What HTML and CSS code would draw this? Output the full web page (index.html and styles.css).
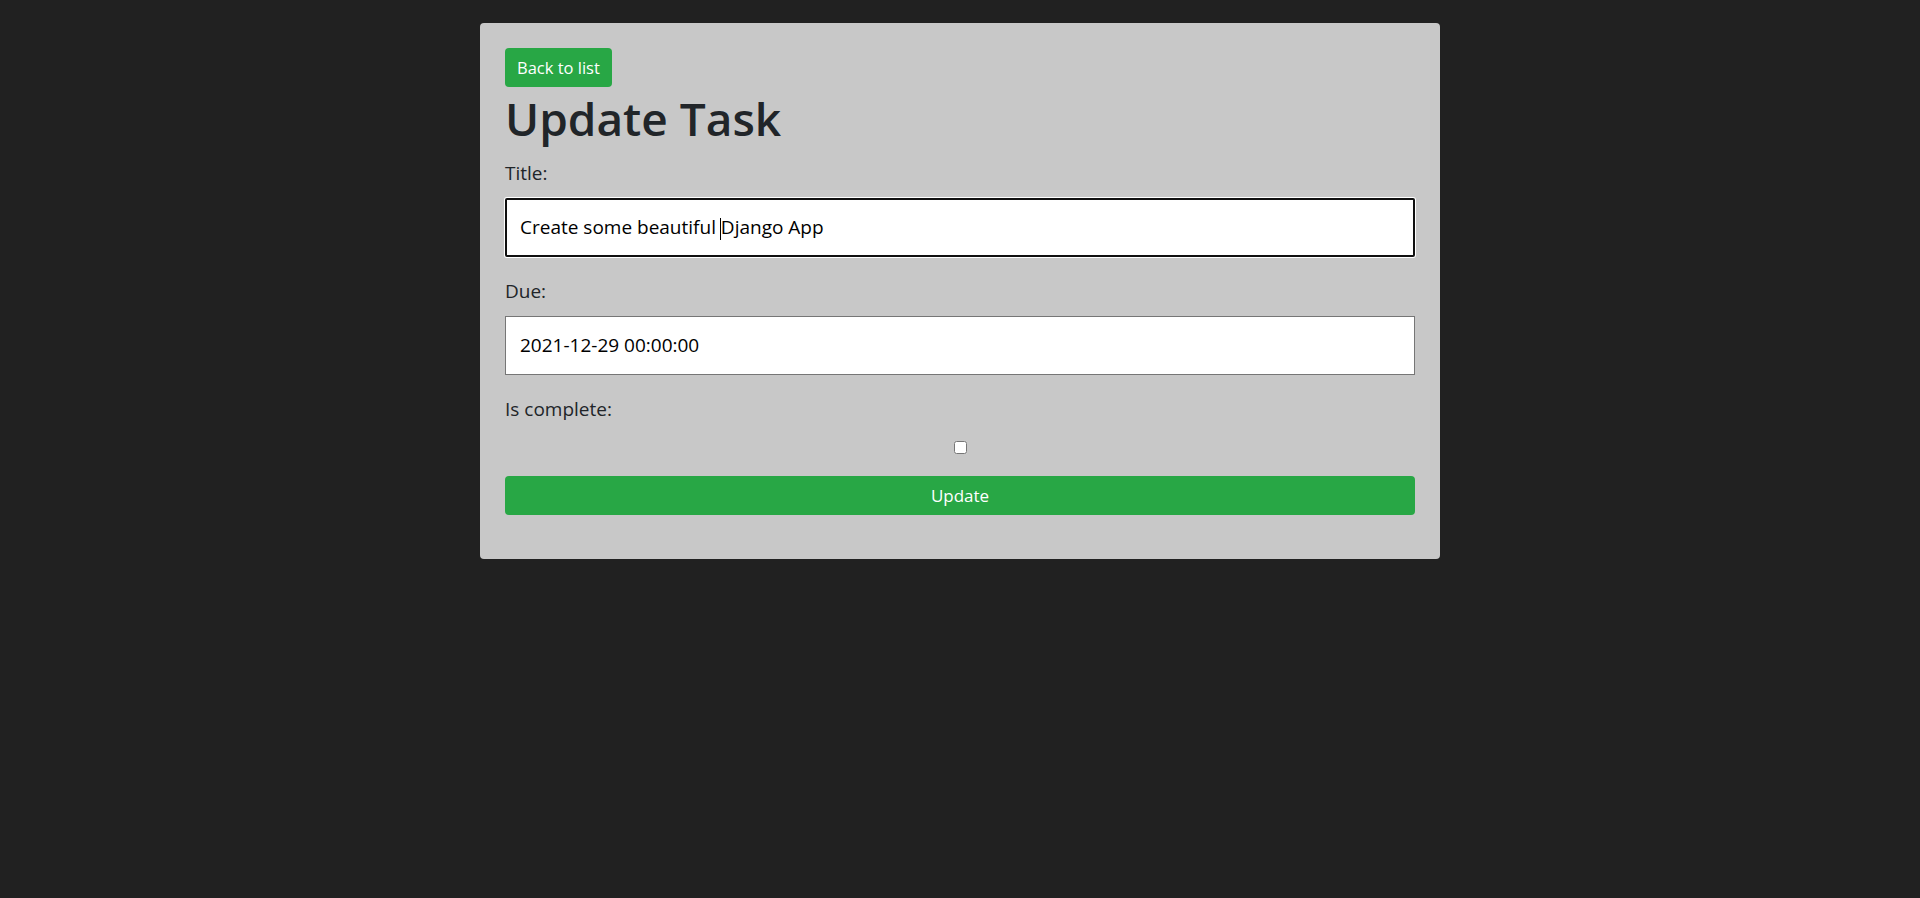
FILE: index.html
```html
<!DOCTYPE html>
<html lang="en">
<head>
<meta charset="utf-8">
<title>Update Task</title>
<link rel="stylesheet" href="styles.css">
</head>
<body>
<div class="card">
  <a class="btn btn-back" href="#">Back to list</a>
  <h1 class="heading">Update Task</h1>
  <form class="task-form">
    <div class="field">
      <label class="field-label" for="id_title">Title:</label>
      <div class="input-wrap">
        <input class="text-input is-focused" id="id_title" type="text" value="Create some beautiful Django App">
        <span class="caret"></span>
      </div>
    </div>
    <div class="field">
      <label class="field-label" for="id_due">Due:</label>
      <input class="text-input" id="id_due" type="text" value="2021-12-29 00:00:00">
    </div>
    <div class="field field-check">
      <label class="field-label" for="id_complete">Is complete:</label>
      <input class="checkbox" id="id_complete" type="checkbox">
    </div>
    <button class="btn btn-submit" type="button">Update</button>
  </form>
</div>
</body>
</html>
```

FILE: styles.css
```css
html, body {
  margin: 0;
  padding: 0;
}
body {
  background: #212121;
  font-family: "Open Sans", "Noto Sans", sans-serif;
  color: #212529;
  font-size: 19px;
  line-height: 1.5;
}
.card {
  box-sizing: border-box;
  width: 960px;
  margin: 23px auto 0;
  padding: 25px 25px 44px;
  background: #c8c8c8;
  border-radius: 4px;
  display: flex;
  flex-direction: column;
  align-items: flex-start;
}
.btn {
  box-sizing: border-box;
  display: inline-block;
  background: #28a745;
  color: #fff;
  border: none;
  border-radius: 4px;
  font-family: inherit;
  text-decoration: none;
  text-align: center;
  height: 39px;
  line-height: 39px;
  padding: 0 12px;
}
.btn-back {
  font-size: 16.5px;
}
.heading {
  margin: 0 0 9px;
  font-size: 46px;
  font-weight: 600;
  line-height: 63.6px;
  height: 63.6px;
}
.task-form {
  width: 100%;
  display: flex;
  flex-direction: column;
}
.field {
  display: flex;
  flex-direction: column;
  margin-bottom: 21px;
}
.field-label {
  display: block;
  height: 27px;
  line-height: 27px;
  margin-bottom: 11px;
}
.input-wrap {
  position: relative;
}
.text-input {
  box-sizing: border-box;
  width: 100%;
  height: 59px;
  border: 1px solid #767676;
  background: #fff;
  padding: 0 13px 0 14px;
  font-family: inherit;
  font-size: 19px;
  color: #000;
  border-radius: 0;
  outline: none;
}
.text-input.is-focused {
  border: 2px solid #101010;
  border-radius: 2px;
  padding-left: 13px;
  box-shadow: 0 0 0 1px #fff;
}
.caret {
  position: absolute;
  left: 215px;
  top: 20px;
  width: 1px;
  height: 22px;
  background: #000;
}
.field-check {
  margin-bottom: 0;
}
.field-check .field-label {
  margin-bottom: 18px;
}
.checkbox {
  width: 13px;
  height: 13px;
  margin: 0 auto 22px;
}
.btn-submit {
  width: 100%;
  font-size: 17px;
}
```
